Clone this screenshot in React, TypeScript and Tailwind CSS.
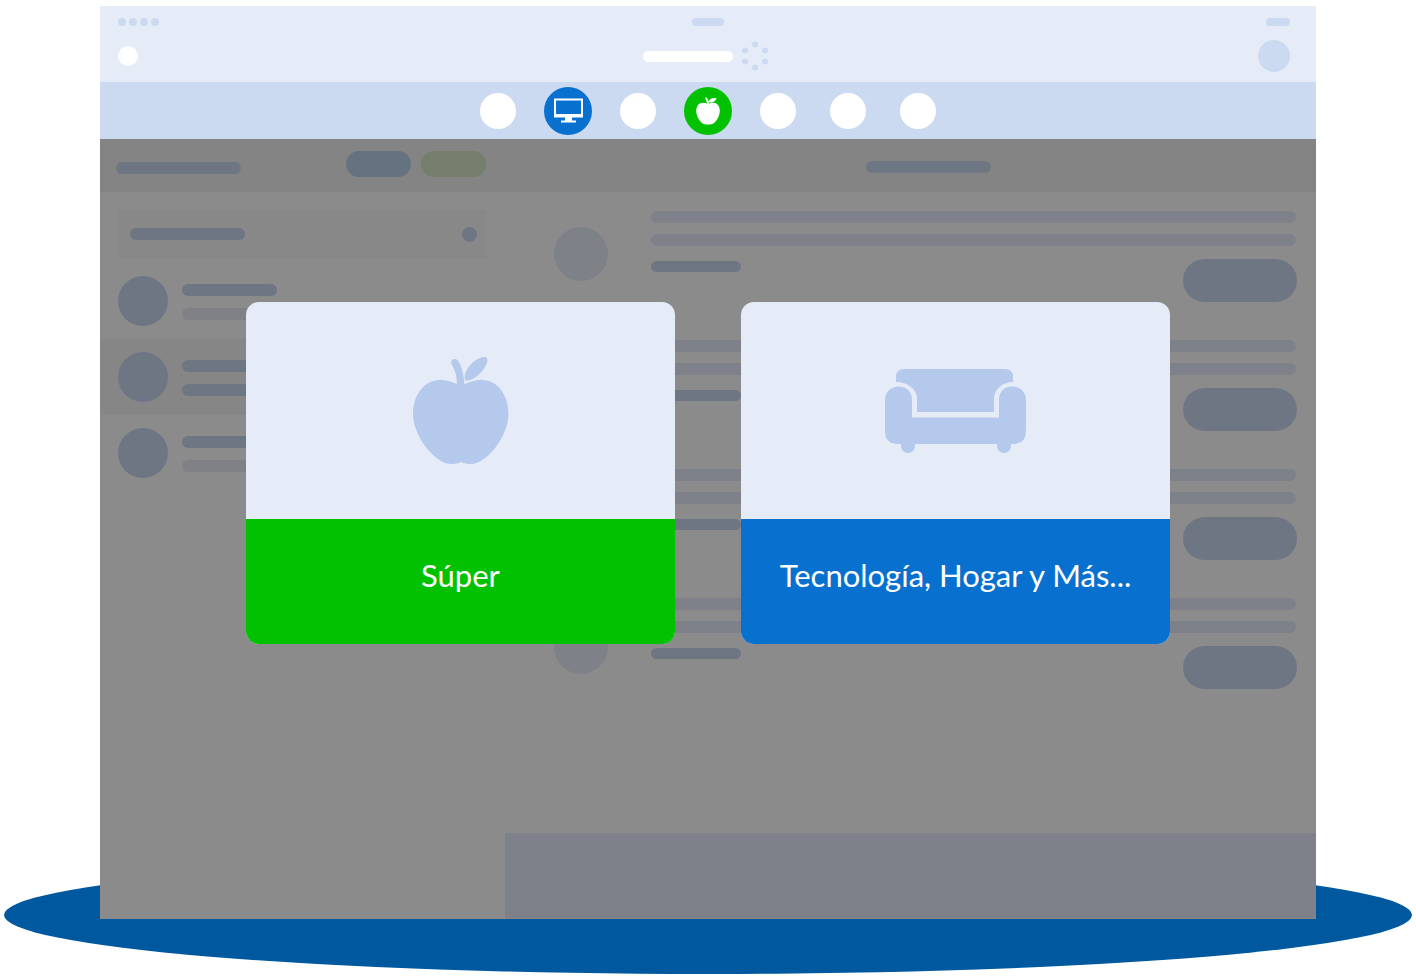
import React from "react";

const APPLE_BODY =
  "M44 27 C39 25 34 22.700 28 22.700 C12 22.700 0 37 0 57 C0 79 22 107 38 107 C42 107 45 106.500 48 105 C51 106.500 54 107 58 107 C74 107 95.500 79 95.500 57 C95.500 37 84 22.700 68 22.700 C62 22.700 57 25 52 27 Z";

function AppleIcon() {
  return (
    <svg viewBox="0 0 96 108" className="h-[108px] w-24" fill="#b5c9ed" aria-hidden="true">
      <path d={APPLE_BODY} />
      <path d="M44 29 C44 19 42 13 38.500 7 C37 3 41 0.500 44.500 3 C49 9 51 18 51.500 29 Z" />
      <path d="M52 23 C50 18 55 9 61 4.500 C66 0.500 72 -1 74 1 C76 5 71 13 66 17.500 C61 22 54 25 52 23 Z" />
    </svg>
  );
}

function SofaIcon() {
  return (
    <svg viewBox="0 0 142 84" className="h-[84px] w-[142px]" fill="#b5c9ed" aria-hidden="true">
      <path d="M11 13 V8 Q11 0 19 0 H120 Q128 0 128 8 V13 Q120 13 114.500 18 Q109 23 109 30 V43 H32 V30 Q32 23 26 18 Q20 13 11 13 Z" />
      <path d="M0 31 C0 23 6 17.500 14 17.500 C22 17.500 27 23 27 31 V48.500 H114 V31 C114 23 119 17.500 127 17.500 C135 17.500 141 23 141 31 V62 Q141 75 128 75 H126 V77 A7 7 0 0 1 112 77 V75 H30 V77 A7 7 0 0 1 16 77 V75 H13 Q0 75 0 62 Z" />
    </svg>
  );
}

function MonitorIcon() {
  return (
    <svg viewBox="0 0 29 25" className="h-[25px] w-[29px]" fill="#fff" aria-hidden="true">
      <path fillRule="evenodd" d="M0 0.500 H29 V19.500 H18 V22.500 H22 V24.500 H7 V22.500 H11 V19.500 H0 Z M2 2.500 V16 H27 V2.500 Z" />
    </svg>
  );
}

function SmallAppleIcon() {
  return (
    <svg viewBox="0 0 24 28" className="h-7 w-6" fill="#fff" aria-hidden="true">
      <path d="M11.500 7 C8 5 4 5.500 2 8 C-1 12 0 18 3 22.500 C6 27 8.500 28 12 27.500 C15.500 28 18 27 21 22.500 C24 18 25 12 22 8 C20 5.500 16 5 12.500 7 Z" />
      <path d="M11 7.500 C11 5 10 3 9 0.800 L10.500 0.300 C11.800 2 12.500 4 13 7.500 Z" />
      <path d="M12 5 C13 1.500 17 0.500 20.500 1 C20 4.500 16 6.500 12 5 Z" />
    </svg>
  );
}

function Spinner() {
  return (
    <svg viewBox="0 0 28 30" className="h-[30px] w-7" fill="#cbdaf1" aria-hidden="true">
      <circle cx="14" cy="3.500" r="3" />
      <circle cx="4" cy="9.500" r="3" />
      <circle cx="24" cy="9.500" r="3" />
      <circle cx="4" cy="20.500" r="3" />
      <circle cx="24" cy="20.500" r="3" />
      <circle cx="14" cy="26.500" r="3" />
    </svg>
  );
}

function Header() {
  return (
    <header className="bg-[#e5ecf8] pt-3 pb-2.5">
      <div className="grid grid-cols-3 items-center pr-[26px] pl-[18px]">
        <div className="flex gap-[3px]">
          {[0, 1, 2, 3].map((i) => (
            <span key={i} className="size-2 rounded-full bg-[#cbdaf1]" />
          ))}
        </div>
        <div className="ml-2 h-2 w-8 justify-self-center rounded-full bg-[#cbdaf1]" />
        <div className="h-2 w-6 justify-self-end rounded-full bg-[#cbdaf1]" />
      </div>
      <div className="mt-3.5 grid grid-cols-3 items-center pr-[26px] pl-[18px]">
        <div className="size-5 rounded-full bg-white" />
        <div className="ml-1 flex items-center gap-2 justify-self-center">
          <div className="h-[11px] w-[90px] rounded-full bg-white" />
          <Spinner />
        </div>
        <div className="size-8 justify-self-end rounded-full bg-[#cbdaf1]" />
      </div>
    </header>
  );
}

function Blank() {
  return <span className="size-9 rounded-full bg-white" />;
}

function Nav() {
  return (
    <nav className="flex h-[57px] justify-center bg-[#cbdaf1]">
      <div className="grid grid-cols-[repeat(7,70px)] place-items-center">
        <Blank />
        <button type="button" aria-label="Tecnología" className="flex size-12 items-center justify-center rounded-full bg-[#0871cf]">
          <MonitorIcon />
        </button>
        <Blank />
        <button type="button" aria-label="Súper" className="flex size-12 items-center justify-center rounded-full bg-[#02c100]">
          <SmallAppleIcon />
        </button>
        <Blank />
        <Blank />
        <Blank />
      </div>
    </nav>
  );
}

function ListRow({ active = false }: { active?: boolean }) {
  return (
    <li className={`flex h-[76px] items-center gap-3.5 px-[18px] ${active ? "bg-[#868686]" : ""}`}>
      <span className="size-[50px] rounded-full bg-[#6f7683]" />
      <div className="flex flex-col gap-3 pt-0.5">
        <span className="h-3 w-[95px] rounded-full bg-[#6f7683]" />
        <span className={`h-3 w-[95px] rounded-full ${active ? "bg-[#6f7683]" : "bg-[#808187]"}`} />
      </div>
    </li>
  );
}

function Sidebar() {
  return (
    <aside className="w-1/3">
      <div className="flex h-[53px] items-start bg-[#848484] pt-3 pr-[19px] pl-4">
        <div className="mt-[11px] h-3 w-[125px] rounded-full bg-[#6f7683]" />
        <div className="ml-auto flex gap-2.5">
          <div className="h-[26px] w-[65px] rounded-[13px] bg-[#65727f]" />
          <div className="h-[26px] w-[65px] rounded-[13px] bg-[#767e6e]" />
        </div>
      </div>
      <div className="mx-[18px] mt-[18px] mb-[5px] flex h-12 items-center justify-between rounded bg-[#888888] pr-2.5 pl-3">
        <span className="h-3 w-[115px] rounded-full bg-[#6f7683]" />
        <span className="size-[15px] rounded-full bg-[#6f7683]" />
      </div>
      <ul>
        <ListRow />
        <ListRow active />
        <ListRow />
      </ul>
    </aside>
  );
}

function FeedRow() {
  return (
    <li className="group flex h-[129px] border-b border-[#898989] pt-[19px] pr-[19px] pl-[49px]">
      <span className="mt-[22px] size-[54px] shrink-0 rounded-full bg-[#7f8189] group-first:mt-4" />
      <div className="ml-[43px] flex-1">
        <div className="mr-px h-3 rounded-full bg-[#7e8189]" />
        <div className="mt-[11px] mr-px h-3 rounded-full bg-[#7e8189]" />
        <div className="flex items-start justify-between pt-[13px]">
          <div className="mt-0.5 h-[11px] w-[90px] rounded-full bg-[#6f7683]" />
          <div className="h-[43px] w-[114px] rounded-[22px] bg-[#6f7683]" />
        </div>
      </div>
    </li>
  );
}

function Feed() {
  return (
    <section className="flex flex-1 flex-col">
      <div className="flex h-[53px] justify-center bg-[#848484] pt-[22px] pl-9">
        <div className="h-3 w-[125px] rounded-full bg-[#6f7683]" />
      </div>
      <ul>
        <FeedRow />
        <FeedRow />
        <FeedRow />
        <FeedRow />
      </ul>
      <div className="mt-auto h-[86px] border-b border-[#868686] bg-[#7e8189]" />
    </section>
  );
}

function CategoryCard({ label, tone, children }: { label: string; tone: string; children: React.ReactNode }) {
  return (
    <button type="button" className="flex w-[429px] flex-col overflow-hidden rounded-[13px] bg-[#e5ecf8]">
      <span className="flex h-[217px] w-full items-center justify-center">{children}</span>
      <span className={`flex h-[125px] w-full items-center justify-center pb-3 text-[31px] text-white ${tone}`}>{label}</span>
    </button>
  );
}

export default function App() {
  return (
    <main className="relative bg-white px-[100px] pt-1.5 pb-[55px] font-['Lato',sans-serif]">
      <div className="absolute inset-x-1 bottom-0 h-[118px] rounded-[50%] bg-[#00589f]" />
      <div className="relative">
        <Header />
        <Nav />
        <div className="relative">
          <div className="flex min-h-[780px] bg-[#8b8b8b]">
            <Sidebar />
            <Feed />
          </div>
          <div className="absolute inset-x-0 top-0 flex justify-center gap-[66px] pt-[163px]">
            <CategoryCard label="Súper" tone="bg-[#02c100]">
              <AppleIcon />
            </CategoryCard>
            <CategoryCard label="Tecnología, Hogar y Más..." tone="bg-[#0871cf]">
              <SofaIcon />
            </CategoryCard>
          </div>
        </div>
      </div>
    </main>
  );
}
